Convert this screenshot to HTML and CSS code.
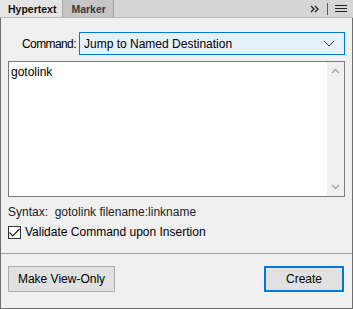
FILE: index.html
```html
<!DOCTYPE html>
<html lang="en">
<head>
    <meta charset="UTF-8">
    <title>Hypertext</title>
    <link rel="stylesheet" href="styles.css">
</head>
<body>
<div class="panel">
    <div class="tabbar">
        <div class="tab active">Hypertext</div>
        <div class="tab">Marker</div>
        <div class="tab-tools">
            <svg width="10" height="8" viewBox="0 0 10 8"><path d="M1 1 L4 4 L1 7 M5 1 L8 4 L5 7" fill="none" stroke="#222" stroke-width="1.3"/></svg>
            <span class="tool-sep"></span>
            <svg width="12" height="9" viewBox="0 0 12 9"><path d="M0 1.5 H12 M0 4.5 H12 M0 7.5 H12" stroke="#222" stroke-width="1.2"/></svg>
        </div>
    </div>

    <div class="content">
        <div class="command-row">
            <label for="command">Command:</label>
            <div class="select">
                <span>Jump to Named Destination</span>
                <svg width="12" height="7" viewBox="0 0 12 7"><path d="M1 1 L6 6 L11 1" fill="none" stroke="#444" stroke-width="1"/></svg>
            </div>
        </div>

        <div class="editor">
            <div class="editor-text">gotolink</div>
            <div class="scrollbar">
                <svg width="9" height="6" viewBox="0 0 9 6"><path d="M1 5 L4.5 1.5 L8 5" fill="none" stroke="#a3a3a3" stroke-width="1.4"/></svg>
                <svg width="9" height="6" viewBox="0 0 9 6"><path d="M1 1 L4.5 4.5 L8 1" fill="none" stroke="#a3a3a3" stroke-width="1.4"/></svg>
            </div>
        </div>

        <div class="syntax">Syntax:&nbsp; gotolink filename:linkname</div>

        <div class="check-row">
            <span class="checkbox">
                <svg width="11" height="9" viewBox="0 0 11 9"><path d="M0.5 4.5 L3.8 7.8 L10.5 1" fill="none" stroke="#222" stroke-width="1.2"/></svg>
            </span>
            <span>Validate Command upon Insertion</span>
        </div>
    </div>

    <div class="footer">
        <button class="btn">Make View-Only</button>
        <button class="btn primary">Create</button>
    </div>
</div>
</body>
</html>
```

FILE: styles.css
```css
html, body {
    margin: 0;
    padding: 0;
}

body {
    font-family: 'Liberation Sans', Arial, sans-serif;
    font-size: 12px;
    color: #000;
    background-color: #f0f0f0;
}

.panel {
    width: 353px;
    height: 309px;
    box-sizing: border-box;
    border: 1px solid #6e6e6e;
    border-top: none;
    background-color: #f0f0f0;
    display: flex;
    flex-direction: column;
}

.tabbar {
    height: 17px;
    display: flex;
    align-items: stretch;
    background-color: #d6d6d6;
    border-bottom: 1px solid #b9b9b9;
    margin: 0 -1px;
}

.tab {
    font-weight: bold;
    font-size: 10.5px;
    color: #3a3a3a;
    padding: 0 7px 0 8px;
    display: flex;
    align-items: center;
    background-color: #c6c6c6;
    border-right: 1px solid #9a9a9a;
}

.tab.active {
    background-color: #e4e4e4;
    color: #111;
    padding: 0 6px 0 8px;
    border-right: 1px solid #a9a9a9;
}

.tab-tools {
    margin-left: auto;
    display: flex;
    align-items: center;
    gap: 7px;
    padding-right: 6px;
}

.tool-sep {
    width: 1px;
    height: 12px;
    background-color: #555;
}

.content {
    padding: 14px 7px 0 7px;
    flex: 1;
}

.command-row {
    display: flex;
    align-items: center;
    padding-left: 14px;
}

.command-row label {
    width: 57px;
    flex-shrink: 0;
    white-space: nowrap;
    letter-spacing: -0.6px;
}

.select {
    flex: 1;
    height: 23px;
    box-sizing: border-box;
    border: 1px solid #0078d7;
    background-color: #e5f1fb;
    display: flex;
    align-items: center;
    justify-content: space-between;
    padding: 0 9px 0 4px;
}

.editor {
    margin-top: 6px;
    height: 136px;
    box-sizing: border-box;
    border: 1px solid #7a7a7a;
    background-color: #fff;
    display: flex;
}

.editor-text {
    flex: 1;
    padding: 3px 2px;
}

.scrollbar {
    width: 17px;
    background-color: #f0f0f0;
    display: flex;
    flex-direction: column;
    justify-content: space-between;
    align-items: center;
    padding: 6px 0;
}

.syntax {
    margin-top: 8px;
    color: #222;
}

.check-row {
    margin-top: 6px;
    display: flex;
    align-items: center;
    gap: 4px;
}

.checkbox {
    width: 13px;
    height: 13px;
    box-sizing: border-box;
    border: 1px solid #333;
    background-color: #fff;
    display: flex;
    align-items: center;
    justify-content: center;
}

.footer {
    border-top: 1px solid #a0a0a0;
    height: 55px;
    box-sizing: border-box;
    display: flex;
    justify-content: space-between;
    align-items: flex-start;
    padding: 12px 8px 0 7px;
}

.btn {
    font-family: inherit;
    font-size: 12px;
    height: 26px;
    background-color: #e1e1e1;
    border: 1px solid #adadad;
    width: 107px;
    padding: 0;
}

.btn.primary {
    width: 80px;
    border: 2px solid #0078d7;
}
```
